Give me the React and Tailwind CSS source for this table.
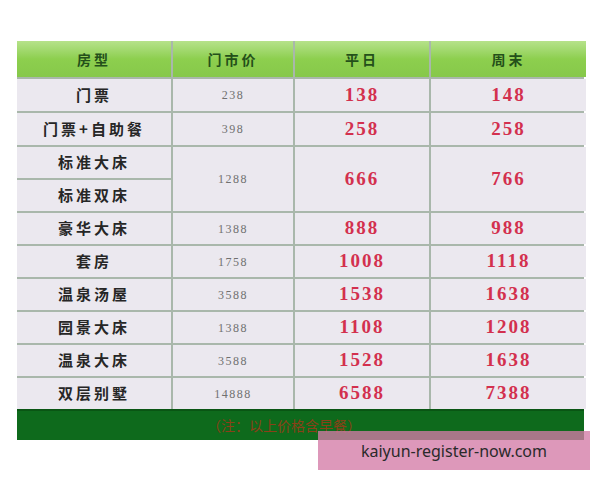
const rows = [
  { name: '门票', base: '238', weekday: '138', weekend: '148' },
  { name: '门票+自助餐', base: '398', weekday: '258', weekend: '258' },
];

const moreRows = [
  { name: '豪华大床', base: '1388', weekday: '888', weekend: '988' },
  { name: '套房', base: '1758', weekday: '1008', weekend: '1118' },
  { name: '温泉汤屋', base: '3588', weekday: '1538', weekend: '1638' },
  { name: '园景大床', base: '1388', weekday: '1108', weekend: '1208' },
  { name: '温泉大床', base: '3588', weekday: '1528', weekend: '1638' },
  { name: '双层别墅', base: '14888', weekday: '6588', weekend: '7388' },
];

const cell = 'flex items-center justify-center bg-[#ebe8ef]';
const nameCls = `${cell} text-[15px] font-bold tracking-[3px] text-[#262626] [font-family:'Noto_Sans_CJK_SC',sans-serif]`;
const baseCls = `${cell} text-[12px] tracking-[1.5px] text-[#707070] [font-family:'Liberation_Serif',serif]`;
const priceCls = `${cell} text-[19px] font-bold tracking-[2px] text-[#d3304e] [font-family:'Liberation_Serif',serif]`;

function Row({ r }) {
  return (
    <>
      <div className={nameCls}>{r.name}</div>
      <div className={baseCls}>{r.base}</div>
      <div className={priceCls}>{r.weekday}</div>
      <div className={priceCls}>{r.weekend}</div>
    </>
  );
}

export default function App() {
  return (
    <div className="relative h-[480px] w-[600px] overflow-hidden bg-white pl-[17px] pt-[41px]">
      <div className="w-[567px]">
        <div className="grid grid-cols-[154px_120px_134px_155px] grid-rows-[36px_32px_32px_31px_31px_31px_31px_31px_31px_31px_31px] gap-[2px] bg-[#a9b7ab]">
          {['房型', '门市价', '平日', '周末'].map((h) => (
            <div
              key={h}
              className="flex items-center justify-center bg-gradient-to-b from-[#b6e28a] via-[#8dcf4e] to-[#86c84a] text-[14px] font-bold tracking-[3px] text-[#24501a] [font-family:'Noto_Sans_CJK_SC',sans-serif]"
            >
              {h}
            </div>
          ))}
          {rows.map((r) => (
            <Row key={r.name} r={r} />
          ))}
          <div className={nameCls}>标准大床</div>
          <div className={`${baseCls} row-span-2`}>1288</div>
          <div className={`${priceCls} row-span-2`}>666</div>
          <div className={`${priceCls} row-span-2`}>766</div>
          <div className={nameCls}>标准双床</div>
          {moreRows.map((r) => (
            <Row key={r.name} r={r} />
          ))}
        </div>
        <div className="flex h-[31px] items-center border-t-2 border-[#0a5514] bg-[#0e6a1c] pl-[190px] text-[14px] text-[#8a4018] [font-family:'Noto_Sans_CJK_SC',sans-serif]">
          （注：以上价格含早餐）
        </div>
      </div>
      <div className="absolute left-[318px] top-[431px] flex h-[39px] w-[272px] items-center justify-center bg-[rgba(211,123,167,0.78)] text-[16px] text-[#2a2a2a] [font-family:'Noto_Sans',sans-serif]">
        kaiyun-register-now.com
      </div>
    </div>
  );
}
